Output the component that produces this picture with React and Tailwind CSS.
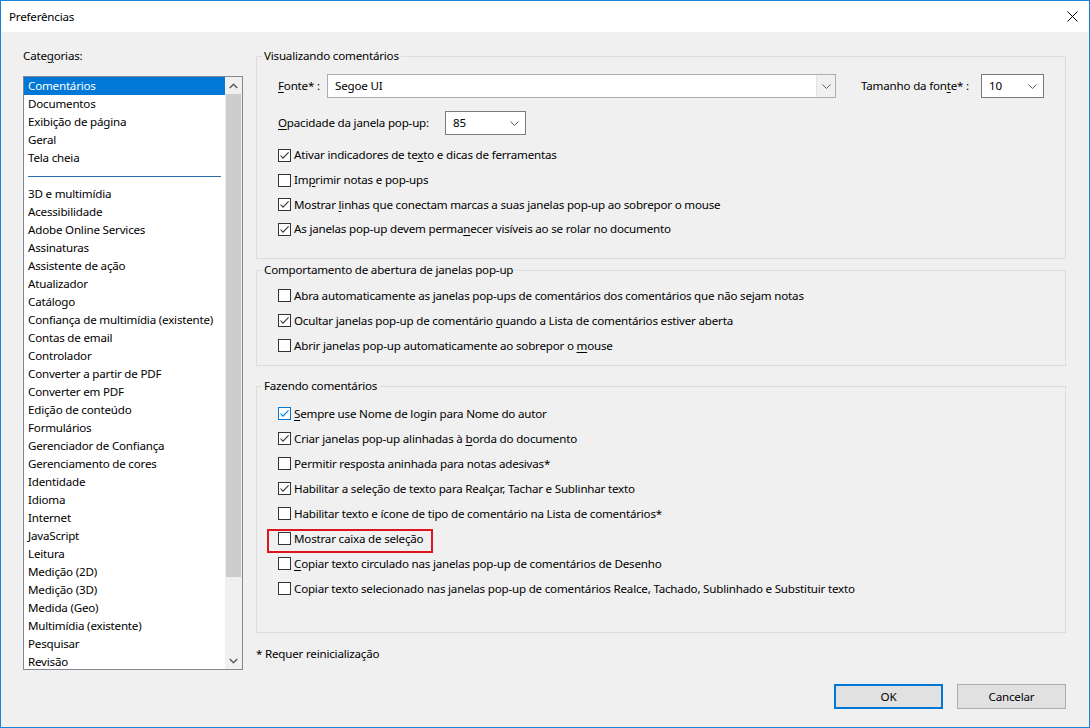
import React from 'react';

const categories = [
  'Comentários',
  'Documentos',
  'Exibição de página',
  'Geral',
  'Tela cheia',
  null,
  '3D e multimídia',
  'Acessibilidade',
  'Adobe Online Services',
  'Assinaturas',
  'Assistente de ação',
  'Atualizador',
  'Catálogo',
  'Confiança de multimídia (existente)',
  'Contas de email',
  'Controlador',
  'Converter a partir de PDF',
  'Converter em PDF',
  'Edição de conteúdo',
  'Formulários',
  'Gerenciador de Confiança',
  'Gerenciamento de cores',
  'Identidade',
  'Idioma',
  'Internet',
  'JavaScript',
  'Leitura',
  'Medição (2D)',
  'Medição (3D)',
  'Medida (Geo)',
  'Multimídia (existente)',
  'Pesquisar',
  'Revisão',
];

const Chevron = () => (
  <svg width="9" height="5" viewBox="0 0 9 5">
    <path d="M0.5 0.5 L4.5 4.5 L8.5 0.5" fill="none" stroke="#606060" strokeWidth="1" />
  </svg>
);

const Check = ({ checked, focus }) => (
  <span
    className={
      focus
        ? 'w-[13px] h-[13px] shrink-0 border border-[#0078d7] bg-white flex items-center justify-center'
        : 'w-[13px] h-[13px] shrink-0 border border-[#333333] bg-white flex items-center justify-center'
    }
  >
    {checked && (
      <svg width="11" height="11" viewBox="0 0 11 11">
        <path
          d="M1.5 5.5 L4 8.2 L9.6 2.3"
          fill="none"
          stroke={focus ? '#0078d7' : '#333333'}
          strokeWidth="1.1"
        />
      </svg>
    )}
  </span>
);

const Row = ({ checked, focus, children, marked }) => (
  <div className="relative h-[25px] flex items-center gap-[3px]">
    <Check checked={checked} focus={focus} />
    <span className="whitespace-nowrap">{children}</span>
    {marked && (
      <span className="absolute -left-[11px] top-[3px] w-[166px] h-[24px] border-2 border-[#e0141e]" />
    )}
  </div>
);

const Combo = ({ value, width, editable }) => (
  <div
    className={
      editable
        ? 'h-[24px] flex border border-[#abadb3] bg-white'
        : 'h-[24px] flex border border-[#7a7a7a] bg-white'
    }
    style={{ width }}
  >
    <span className="flex-1 pl-[7px] flex items-center">{value}</span>
    <span
      className={
        editable
          ? 'w-[19px] flex items-center justify-center bg-[#f0f0f0] border-l border-[#e3e3e3]'
          : 'w-[22px] flex items-center justify-center'
      }
    >
      <Chevron />
    </span>
  </div>
);

const Group = ({ title, className, children }) => (
  <fieldset className={`border border-[#dcdcdc] p-0 m-0 ${className}`}>
    <legend className="ml-[5px] px-[2px] leading-[16px]">{title}</legend>
    <div className="pl-[21px] pr-[21px]">{children}</div>
  </fieldset>
);

export default function App() {
  return (
    <div className="w-[1090px] h-[728px] flex flex-col border border-[#1883d7] bg-[#f0f0f0] text-[11.6px] tracking-[-0.2px] leading-[16px] text-black font-['Noto_Sans',sans-serif]">
      {/* barra de título */}
      <div className="h-[31px] bg-white flex items-center justify-between pl-[8px] pr-[11px] shrink-0">
        <span>Preferências</span>
        <svg width="11" height="11" viewBox="0 0 11 11">
          <path d="M0.5 0.5 L10.5 10.5 M10.5 0.5 L0.5 10.5" stroke="#000" strokeWidth="1" />
        </svg>
      </div>

      <div className="flex-1 flex pl-[22px]">
        {/* categorias */}
        <div className="w-[220px] pt-[16px]">
          <div>
            Cate<u className="underline-offset-2">g</u>orias:
          </div>
          <div className="mt-[12px] h-[594px] border border-[#828790] bg-white flex overflow-hidden">
            <div className="flex-1 overflow-hidden">
              {categories.map((c, i) =>
                c === null ? (
                  <div key={i} className="h-[18px] flex items-center pl-[4px] pr-[4px]">
                    <div className="w-full h-px bg-[#2d6ea8]" />
                  </div>
                ) : (
                  <div
                    key={i}
                    className={
                      i === 0
                        ? 'h-[18px] flex items-center pl-[4px] bg-[#0078d7] text-white whitespace-nowrap'
                        : 'h-[18px] flex items-center pl-[4px] whitespace-nowrap'
                    }
                  >
                    {c}
                  </div>
                )
              )}
            </div>
            <div className="w-[17px] bg-[#f0f0f0] flex flex-col">
              <div className="h-[17px] flex items-center justify-center">
                <svg width="9" height="6" viewBox="0 0 9 6">
                  <path d="M0.8 5 L4.5 1.3 L8.2 5" fill="none" stroke="#606060" strokeWidth="1.6" />
                </svg>
              </div>
              <div className="mx-px h-[483px] bg-[#cdcdcd]" />
              <div className="flex-1" />
              <div className="h-[17px] flex items-center justify-center">
                <svg width="9" height="6" viewBox="0 0 9 6">
                  <path d="M0.8 1 L4.5 4.7 L8.2 1" fill="none" stroke="#606060" strokeWidth="1.6" />
                </svg>
              </div>
            </div>
          </div>
        </div>

        {/* painel direito */}
        <div className="ml-[13px] w-[810px] pt-[16px] flex flex-col">
          <Group title="Visualizando comentários" className="h-[211px]">
            <div className="mt-[10px] h-[24px] flex items-center">
              <span className="w-[49px] whitespace-nowrap">
                <u className="underline-offset-2">F</u>onte* :
              </span>
              <Combo value="Segoe UI" width={509} editable />
              <span className="ml-[25px] w-[120px] whitespace-nowrap">
                Tamanho da fon<u className="underline-offset-2">t</u>e* :
              </span>
              <Combo value="10" width={63} />
            </div>
            <div className="mt-[13px] h-[24px] flex items-center">
              <span className="w-[167px] whitespace-nowrap">
                <u className="underline-offset-2">O</u>pacidade da janela pop-up:
              </span>
              <Combo value="85" width={81} />
            </div>
            <div className="mt-[8px] [&>div]:h-[24.7px]">
              <Row checked>
                Ativar indicadores de te<u className="underline-offset-2">x</u>to e dicas de ferramentas
              </Row>
              <Row>
                Im<u className="underline-offset-2">p</u>rimir notas e pop-ups
              </Row>
              <Row checked>
                Mostrar <u className="underline-offset-2">l</u>inhas que conectam marcas a suas janelas pop-up ao sobrepor o mouse
              </Row>
              <Row checked>
                As janelas pop-up devem perma<u className="underline-offset-2">n</u>ecer visíveis ao se rolar no documento
              </Row>
            </div>
          </Group>

          <Group title="Comportamento de abertura de janelas pop-up" className="mt-[3px] h-[104px]">
            <div className="pt-[5px]">
              <Row>
                Abra automaticamente as <u className="underline-offset-2">j</u>anelas pop-ups de comentários dos comentários que não sejam notas
              </Row>
              <Row checked>
                Ocultar janelas pop-up de comentário <u className="underline-offset-2">q</u>uando a Lista de comentários estiver aberta
              </Row>
              <Row>
                Abrir janelas pop-up automaticamente ao sobrepor o <u className="underline-offset-2">m</u>ouse
              </Row>
            </div>
          </Group>

          <Group title="Fazendo comentários" className="mt-[12px] h-[255px]">
            <div className="pt-[7px]">
              <Row checked focus>
                <u className="underline-offset-2">S</u>empre use Nome de login para Nome do autor
              </Row>
              <Row checked>
                Criar janelas pop-up alinhadas à <u className="underline-offset-2">b</u>orda do documento
              </Row>
              <Row>Permitir resposta aninhada para notas adesivas*</Row>
              <Row checked>Habilitar a seleção de texto para Realçar, Tachar e Sublinhar texto</Row>
              <Row>Habilitar texto e ícone de tipo de comentário na Lista de comentários*</Row>
              <Row marked>Mostrar caixa de seleção</Row>
              <Row>
                <u className="underline-offset-2">C</u>opiar texto circulado nas janelas pop-up de comentários de Desenho
              </Row>
              <Row>Copiar texto selecionado nas janelas pop-up de comentários Realce, Tachado, Sublinhado e Substituir texto</Row>
            </div>
          </Group>

          <div className="mt-[13px]">* Requer reinicialização</div>

          <div className="mt-[22px] flex justify-end gap-[14px]">
            <button className="w-[109px] h-[25px] border-2 border-[#0078d7] bg-[#e1e1e1]">OK</button>
            <button className="w-[109px] h-[25px] border border-[#adadad] bg-[#e1e1e1]">Cancelar</button>
          </div>
        </div>
      </div>
    </div>
  );
}
